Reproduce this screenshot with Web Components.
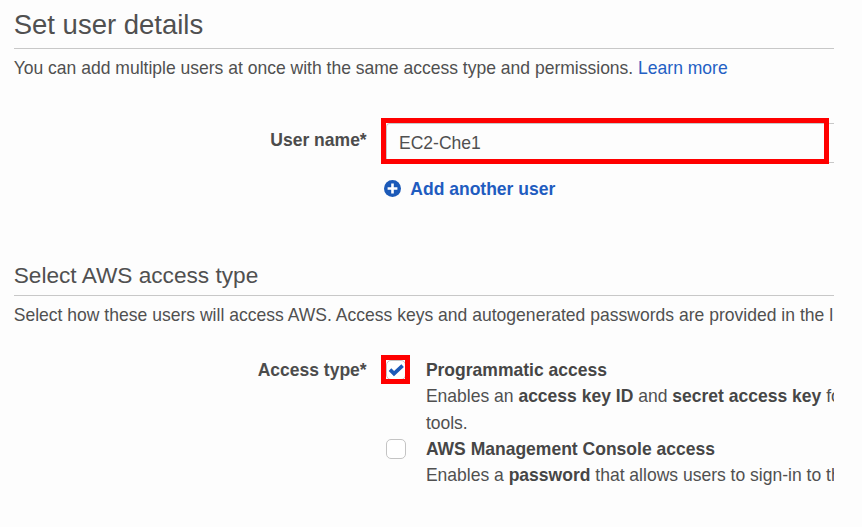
<!DOCTYPE html>
<html lang="en">
<head>
<meta charset="utf-8">
<title>Set user details</title>
<style>
html, body { margin: 0; background: #fdfdfd; }
body { width: 862px; height: 527px; overflow: hidden; font: 17.52px/26.3px "Liberation Sans", Arial, sans-serif; color: #505050; }
</style>
</head>
<body>
<user-form></user-form>
<script>
const define = (name, html) => customElements.define(name, class extends HTMLElement {
  constructor() {
    super();
    const t = document.createElement('template');
    t.innerHTML = html;
    this.attachShadow({ mode: 'open' }).append(t.content.cloneNode(true));
  }
});

define('section-head', `
<style>
:host { display: block; }
.title { display: flex; align-items: flex-end; box-sizing: border-box; height: var(--head-h, 49px); padding-bottom: var(--head-pad, 7px); border-bottom: 1px solid #c8c8c8; font-size: var(--head-size, 27.5px); line-height: 32px; }
.intro { padding-top: 6px; height: 26px; line-height: 26px; white-space: nowrap; letter-spacing: var(--intro-track, 0); }
</style>
<div class="title"><slot name="title"></slot></div>
<div class="intro"><slot></slot></div>`);

define('form-row', `
<style>
:host { display: grid; grid-template-columns: 353px 1fr; column-gap: 19.3px; }
.label { text-align: right; font-weight: bold; white-space: nowrap; padding-top: var(--label-top, 0px); color: #4c4c4c; }
.field { min-width: 0; }
</style>
<div class="label"><slot name="label"></slot></div>
<div class="field"><slot></slot></div>`);

define('highlight-frame', `
<style>
:host { display: block; position: relative; }
i { position: absolute; inset: var(--frame-inset); border: 5px solid #f00; }
</style>
<slot></slot><i></i>`);

define('name-field', `
<style>
:host { display: block; height: 40px; box-sizing: border-box; border: 1px solid #c8c8c8; border-right: 0; border-radius: 4px 0 0 4px; padding-left: 12px; line-height: 39px; }
</style>
<slot></slot>`);

define('add-link', `
<style>
:host { display: flex; align-items: center; gap: 9.3px; height: 26px; padding-top: 13px; color: #1f5cc0; font-weight: bold; white-space: nowrap; margin-left: -2px; }
svg { display: block; position: relative; top: -1px; }
</style>
<svg width="17" height="17" viewBox="0 0 17 17"><circle cx="8.5" cy="8.5" r="8.5" fill="#1c5ab8"/><path d="M8.5 3.6v9.8M3.6 8.5h9.8" stroke="#fff" stroke-width="2.6"/></svg>
<span><slot></slot></span>`);

define('check-box', `
<style>
:host { display: block; width: 20px; height: 20px; box-sizing: border-box; border: 1px solid #c4c4c4; border-radius: 5px; background: #fff; }
svg { display: none; }
:host([checked]) svg { display: block; }
</style>
<svg width="18" height="18" viewBox="0 0 18 18"><path d="M3 8.6l4 4 8.6-8" fill="none" stroke="#1c5ab8" stroke-width="3.7"/></svg>`);

define('access-option', `
<style>
:host { display: grid; grid-template-columns: 20px 1fr; column-gap: 19.9px; white-space: nowrap; }
.box { padding-top: 3px; }
</style>
<div class="box"><slot name="box"></slot></div>
<div><slot></slot></div>`);

define('user-form', `
<style>
:host { display: block; box-sizing: border-box; width: 834px; height: 527px; padding-left: 13.7px; overflow: hidden; }
b { color: #464646; }
a { color: #2460c4; text-decoration: none; }
.name { margin-top: 42px; --label-top: 4px; }
.name highlight-frame { --frame-inset: -5px 5px -1px -5px; }
.type { --head-h: 38px; --head-pad: 4px; --head-size: 22.65px; --intro-track: 0.012px; margin-top: 56px; }
.access { margin-top: 29px; }
.access highlight-frame { --frame-inset: -5px -4px -4px -5px; }
</style>
<section-head><span slot="title">Set user details</span>You can add multiple users at once with the same access type and permissions. <a>Learn more</a></section-head>
<form-row class="name"><span slot="label">User name*</span>
<highlight-frame><name-field>EC2-Che1</name-field></highlight-frame><add-link>Add another user</add-link></form-row>
<section-head class="type"><span slot="title">Select AWS access type</span>Select how these users will access AWS. Access keys and autogenerated passwords are provided in the l</section-head>
<form-row class="access"><span slot="label">Access type*</span>
<access-option><highlight-frame slot="box"><check-box checked></check-box></highlight-frame><b>Programmatic access</b><br>Enables an <b>access key ID</b> and <b>secret access key</b> fo<br>tools.</access-option>
<access-option><check-box slot="box"></check-box><b>AWS Management Console access</b><br>Enables a <b>password</b> that allows users to sign-in to th</access-option></form-row>`);
</script>
</body>
</html>
